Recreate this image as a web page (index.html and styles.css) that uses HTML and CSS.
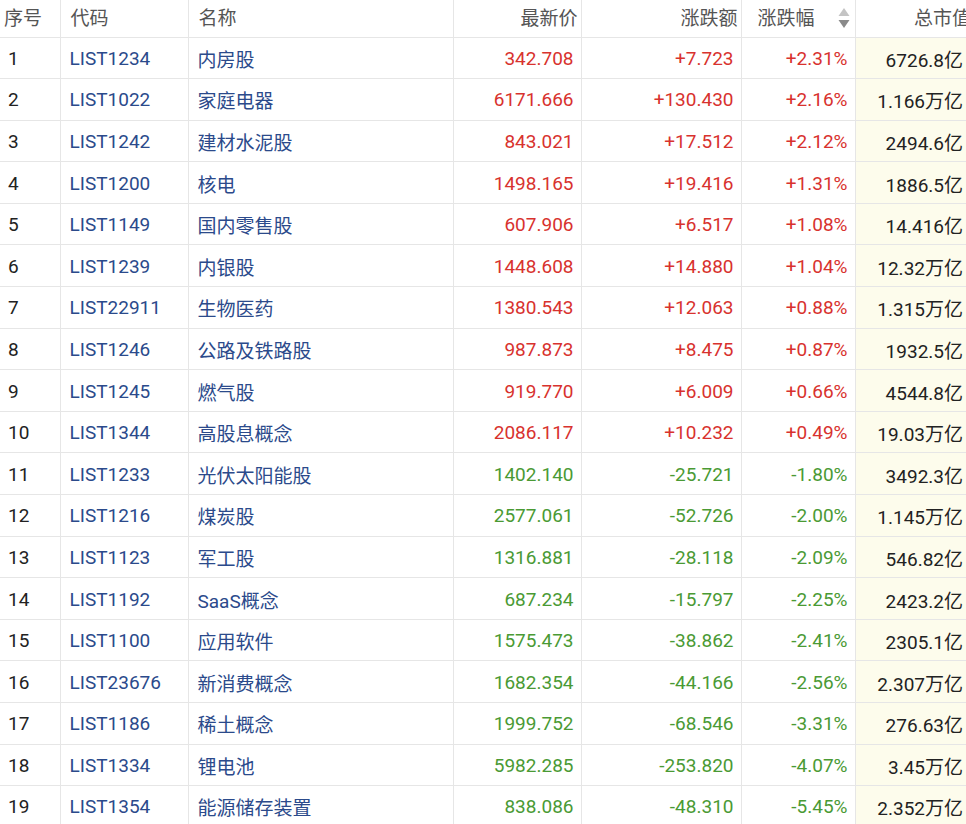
FILE: index.html
```html
<!DOCTYPE html>
<html lang="zh-CN">
<head>
<meta charset="utf-8">
<title>板块行情</title>
<link rel="stylesheet" href="styles.css">
</head>
<body>
<div class="viewport">
<table class="quote">
  <colgroup>
    <col class="c-idx"><col class="c-code"><col class="c-name"><col class="c-price"><col class="c-chg"><col class="c-pct"><col class="c-cap">
  </colgroup>
  <thead>
    <tr>
      <th class="h-left h-idx">序号</th>
      <th class="h-left">代码</th>
      <th class="h-left">名称</th>
      <th class="h-right">最新价</th>
      <th class="h-right">涨跌额</th>
      <th class="h-sort"><div class="sort-wrap"><span>涨跌幅</span><svg class="sort-icon" width="12" height="22" viewBox="0 0 12 22"><path d="M6 1 L11.5 9 L0.5 9 Z" fill="#c4c4c4"/><path d="M0.5 13 L11.5 13 L6 21 Z" fill="#8a8a8a"/></svg></div></th>
      <th class="h-right h-cap">总市值</th>
    </tr>
  </thead>
  <tbody>
    <tr><td class="idx">1</td><td class="code">LIST1234</td><td class="name">内房股</td><td class="num up">342.708</td><td class="num up">+7.723</td><td class="num up">+2.31%</td><td class="cap">6726.8亿</td></tr>
    <tr><td class="idx">2</td><td class="code">LIST1022</td><td class="name">家庭电器</td><td class="num up">6171.666</td><td class="num up">+130.430</td><td class="num up">+2.16%</td><td class="cap">1.166万亿</td></tr>
    <tr><td class="idx">3</td><td class="code">LIST1242</td><td class="name">建材水泥股</td><td class="num up">843.021</td><td class="num up">+17.512</td><td class="num up">+2.12%</td><td class="cap">2494.6亿</td></tr>
    <tr><td class="idx">4</td><td class="code">LIST1200</td><td class="name">核电</td><td class="num up">1498.165</td><td class="num up">+19.416</td><td class="num up">+1.31%</td><td class="cap">1886.5亿</td></tr>
    <tr><td class="idx">5</td><td class="code">LIST1149</td><td class="name">国内零售股</td><td class="num up">607.906</td><td class="num up">+6.517</td><td class="num up">+1.08%</td><td class="cap">14.416亿</td></tr>
    <tr><td class="idx">6</td><td class="code">LIST1239</td><td class="name">内银股</td><td class="num up">1448.608</td><td class="num up">+14.880</td><td class="num up">+1.04%</td><td class="cap">12.32万亿</td></tr>
    <tr><td class="idx">7</td><td class="code">LIST22911</td><td class="name">生物医药</td><td class="num up">1380.543</td><td class="num up">+12.063</td><td class="num up">+0.88%</td><td class="cap">1.315万亿</td></tr>
    <tr><td class="idx">8</td><td class="code">LIST1246</td><td class="name">公路及铁路股</td><td class="num up">987.873</td><td class="num up">+8.475</td><td class="num up">+0.87%</td><td class="cap">1932.5亿</td></tr>
    <tr><td class="idx">9</td><td class="code">LIST1245</td><td class="name">燃气股</td><td class="num up">919.770</td><td class="num up">+6.009</td><td class="num up">+0.66%</td><td class="cap">4544.8亿</td></tr>
    <tr><td class="idx">10</td><td class="code">LIST1344</td><td class="name">高股息概念</td><td class="num up">2086.117</td><td class="num up">+10.232</td><td class="num up">+0.49%</td><td class="cap">19.03万亿</td></tr>
    <tr><td class="idx">11</td><td class="code">LIST1233</td><td class="name">光伏太阳能股</td><td class="num down">1402.140</td><td class="num down">-25.721</td><td class="num down">-1.80%</td><td class="cap">3492.3亿</td></tr>
    <tr><td class="idx">12</td><td class="code">LIST1216</td><td class="name">煤炭股</td><td class="num down">2577.061</td><td class="num down">-52.726</td><td class="num down">-2.00%</td><td class="cap">1.145万亿</td></tr>
    <tr><td class="idx">13</td><td class="code">LIST1123</td><td class="name">军工股</td><td class="num down">1316.881</td><td class="num down">-28.118</td><td class="num down">-2.09%</td><td class="cap">546.82亿</td></tr>
    <tr><td class="idx">14</td><td class="code">LIST1192</td><td class="name">SaaS概念</td><td class="num down">687.234</td><td class="num down">-15.797</td><td class="num down">-2.25%</td><td class="cap">2423.2亿</td></tr>
    <tr><td class="idx">15</td><td class="code">LIST1100</td><td class="name">应用软件</td><td class="num down">1575.473</td><td class="num down">-38.862</td><td class="num down">-2.41%</td><td class="cap">2305.1亿</td></tr>
    <tr><td class="idx">16</td><td class="code">LIST23676</td><td class="name">新消费概念</td><td class="num down">1682.354</td><td class="num down">-44.166</td><td class="num down">-2.56%</td><td class="cap">2.307万亿</td></tr>
    <tr><td class="idx">17</td><td class="code">LIST1186</td><td class="name">稀土概念</td><td class="num down">1999.752</td><td class="num down">-68.546</td><td class="num down">-3.31%</td><td class="cap">276.63亿</td></tr>
    <tr><td class="idx">18</td><td class="code">LIST1334</td><td class="name">锂电池</td><td class="num down">5982.285</td><td class="num down">-253.820</td><td class="num down">-4.07%</td><td class="cap">3.45万亿</td></tr>
    <tr><td class="idx">19</td><td class="code">LIST1354</td><td class="name">能源储存装置</td><td class="num down">838.086</td><td class="num down">-48.310</td><td class="num down">-5.45%</td><td class="cap">2.352万亿</td></tr>
  </tbody>
</table>
</div>
</body>
</html>
```

FILE: styles.css
```css
html, body {
  margin: 0;
  padding: 0;
  background: #ffffff;
}

.viewport {
  width: 966px;
  height: 824px;
  overflow: hidden;
}

.quote {
  width: 975px;
  table-layout: fixed;
  border-collapse: collapse;
  font-family: "Roboto", "Noto Sans CJK SC", sans-serif;
  font-size: 19px;
  color: #222222;
}

.c-idx { width: 60px; }
.c-code { width: 128px; }
.c-name { width: 265px; }
.c-price { width: 128px; }
.c-chg { width: 160px; }
.c-pct { width: 114px; }
.c-cap { width: 120px; }

.quote th,
.quote td {
  border-left: 1px solid #e6e6e6;
  border-bottom: 1px solid #e6e6e6;
  white-space: nowrap;
  overflow: hidden;
  padding: 0;
}

.quote th:first-child,
.quote td:first-child {
  border-left: none;
}

.quote thead tr {
  height: 37px;
}

.quote th {
  font-weight: 400;
  color: #555555;
  background: #ffffff;
  padding-bottom: 4px;
}

.quote .h-left {
  text-align: left;
  padding-left: 10px;
}

.quote .h-idx {
  padding-left: 4px;
}

.quote .h-right {
  text-align: right;
  padding-right: 3px;
}

.quote .h-cap {
  padding-right: 4px;
}

.sort-wrap {
  display: flex;
  justify-content: flex-end;
  align-items: center;
  gap: 23px;
  padding-right: 5px;
}

.sort-icon {
  display: block;
  margin-top: 3px;
}

.quote tbody tr {
  height: 41.6px;
}

.quote td {
  padding-top: 1px;
}

.quote .idx {
  padding-left: 8px;
  color: #222222;
}

.quote .code,
.quote .name {
  padding-left: 9px;
  color: #2b4a8b;
}

.quote .num {
  text-align: right;
  padding-right: 7px;
}

.up {
  color: #d8322e;
}

.down {
  color: #4a9a34;
}

.quote .cap {
  text-align: right;
  padding-right: 12px;
  background: #fdfcec;
  color: #222222;
}
```
